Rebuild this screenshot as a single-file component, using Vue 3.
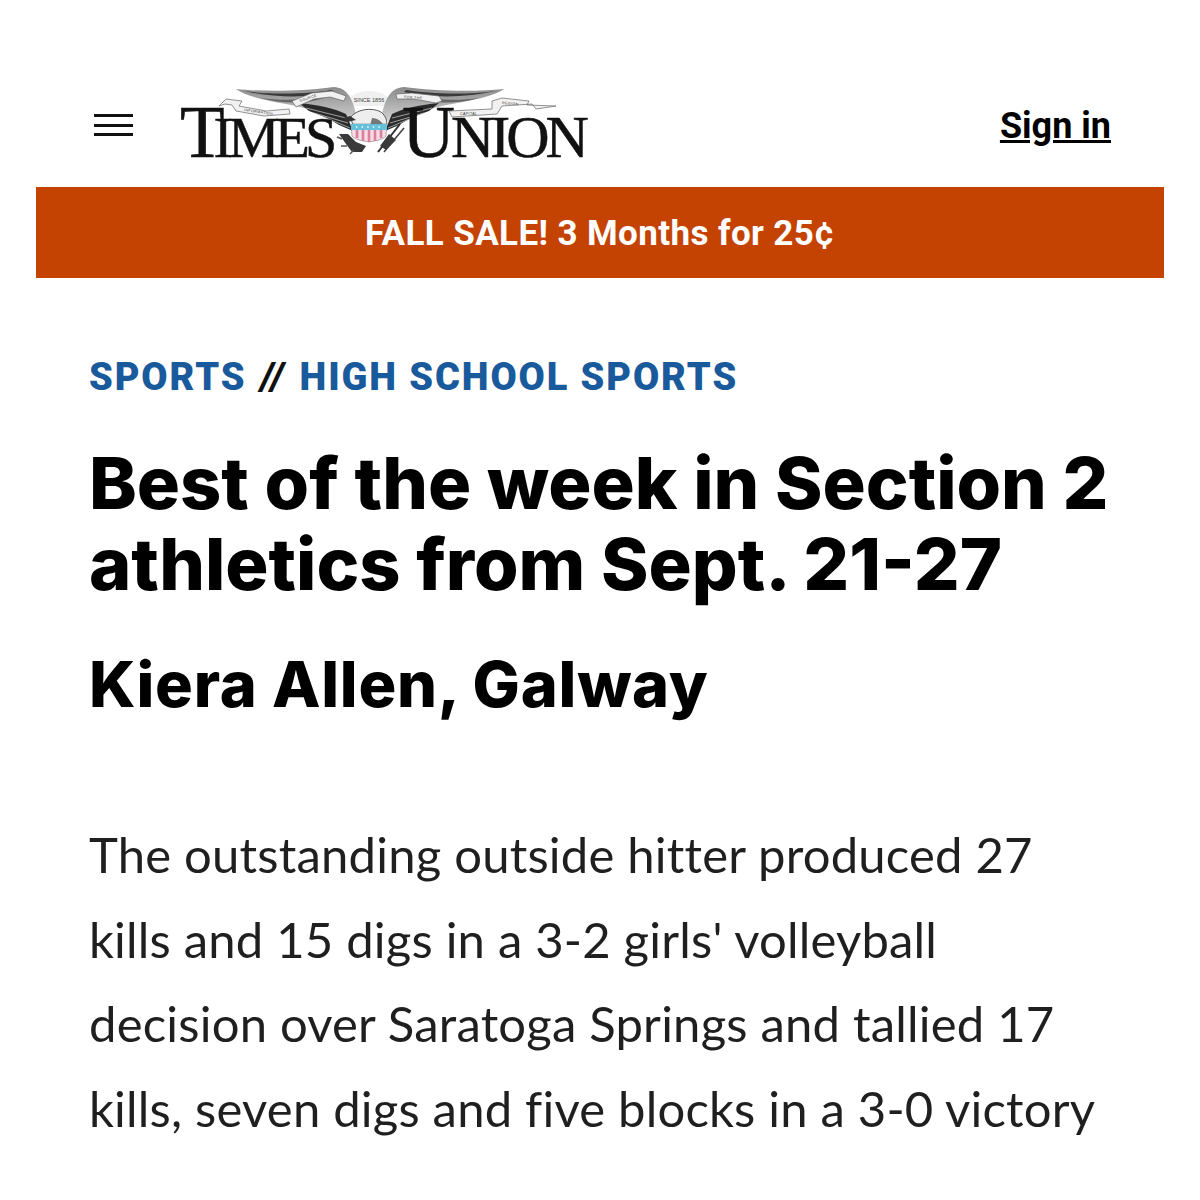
<template>
  <div class="page">
    <header class="topbar">
      <button class="menu-btn" type="button" aria-label="Menu">
        <span></span><span></span><span></span>
      </button>
      <a class="logo">
        <svg class="eagle" viewBox="0 0 360 72" width="360" height="72">
          <defs>
            <linearGradient id="wingfade" x1="0" y1="0" x2="0" y2="1">
              <stop offset="0" stop-color="#8a8a8a"/>
              <stop offset="1" stop-color="#dcdcdc"/>
            </linearGradient>
          </defs>

          <!-- halo above the head -->
          <path d="M133 22 C133 2 177 2 177 22 Z" fill="#f0f0f0"/>
          <text x="155" y="17.5" class="since">SINCE 1856</text>

          <!-- left wing -->
          <path d="M22 5 C50 8 95 7 120 3 C132 4 138 12 142 30 L132 42 C118 30 92 24 72 20 C50 16 32 12 22 5 Z" fill="url(#wingfade)"/>
          <path d="M30 7 C60 11 96 10 118 6 L120 8 C96 14 60 14 30 7 Z" fill="#3a3a3a"/>
          <path d="M46 14 C70 17 90 16 108 12 L110 14 C92 20 70 20 46 14 Z" fill="#666"/>
          <path d="M85 19 C104 21 120 24 132 30 L139 47 L125 41 C114 34 104 30 95 27 Z" fill="#2a2a2a"/>
          <path d="M92 24 L132 34 M100 29 L134 39 M110 33 L136 44" stroke="#bdbdbd" stroke-width=".8"/>

          <!-- right wing -->
          <path d="M290 5 C262 8 217 7 190 3 C178 4 172 12 168 30 L178 42 C192 30 218 24 238 20 C260 16 280 12 290 5 Z" fill="url(#wingfade)"/>
          <path d="M282 7 C252 11 216 10 192 6 L190 8 C216 14 252 14 282 7 Z" fill="#3a3a3a"/>
          <path d="M266 14 C242 17 222 16 204 12 L202 14 C220 20 242 20 266 14 Z" fill="#666"/>
          <path d="M225 19 C206 21 190 24 178 30 L171 47 L185 41 C196 34 206 30 215 27 Z" fill="#2a2a2a"/>
          <path d="M218 24 L178 34 M210 29 L176 39 M200 33 L174 44" stroke="#bdbdbd" stroke-width=".8"/>

          <!-- ribbons -->
          <path d="M5 22 L12 15 L28 17 L25 22 L52 27 L75 25 L76 30 L50 32 L22 27 L18 21 L11 20 Z" class="ribbon"/>
          <path d="M78 17 L98 9 L118 7 L132 12 L130 17 L116 13 L100 15 L82 23 Z" class="ribbon"/>
          <path d="M182 10 L198 9 L225 12 L228 17 L222 19 L200 15 L183 15 Z" class="ribbon"/>
          <path d="M235 27 L278 25 L278 17 L288 14 L315 17 L313 21 L342 22 L322 25 L318 20 L288 22 L283 30 L238 33 Z" class="ribbon"/>
          <text x="30" y="27" class="band" transform="rotate(8 30 27)">INFORMATION</text>
          <text x="86" y="18" class="band" transform="rotate(-18 86 18)">SOURCE</text>
          <text x="190" y="14" class="band" transform="rotate(4 190 14)">FOR THE</text>
          <text x="246" y="31" class="band">CAPITAL</text>
          <text x="288" y="20" class="band" transform="rotate(5 288 20)">REGION</text>

          <!-- body and head -->
          <path d="M136 34 C142 25 158 23 167 28 C172 32 174 38 172 42 L140 42 C138 38 137 36 136 34 Z" fill="#eeeeee" stroke="#333" stroke-width=".8"/>
          <path d="M136 32 L129 34 L133 38 L142 36 Z" fill="#333"/>
          <path d="M158 34 C164 34 168 38 170 42 L156 42 Z" fill="#777"/>

          <!-- shield -->
          <path d="M137 40 L173 40 L172 52 C169 56 160 57 155 58 C150 57 141 56 138 52 Z" fill="#f7dbe2" stroke="#666" stroke-width=".5"/>
          <path d="M137 40 L173 40 L173 46 L137 46 Z" fill="#63c1dc"/>
          <path d="M142 43 H170" stroke="#ffffff" stroke-width="1.4" stroke-dasharray="1.4 4.2"/>
          <path d="M143 46 V54 M149 46 V57 M155 46 V58 M161 46 V57 M167 46 V54" stroke="#d9809c" stroke-width="2.6"/>

          <!-- olive branch and arrows -->
          <path d="M125 50 L134 50 L142 58 L152 62 L148 68 L138 68 L132 60 Z" fill="#3a3a3a"/>
          <path d="M128 55 L123 53 M133 62 L127 62 M140 66 L136 70" stroke="#555" stroke-width="1.4"/>
          <path d="M186 40 L164 68" stroke="#2e2e2e" stroke-width="2"/>
          <path d="M190 44 L170 68" stroke="#444" stroke-width="1.6"/>
          <path d="M175 50 L182 56 L172 66 L166 62 Z" fill="#3a3a3a"/>
        </svg>
        <span class="word times"><b>T</b>IMES</span>
        <span class="word union"><b>U</b>NION</span>
      </a>
      <a class="sign-in">Sign in</a>
    </header>

    <div class="promo">FALL SALE! 3 Months for 25¢</div>

    <main class="article">
      <div class="crumbs">
        <a>SPORTS</a>
        <span class="sep">//</span>
        <a>HIGH SCHOOL SPORTS</a>
      </div>
      <h1>Best of the week in Section 2 athletics from Sept. 21-27</h1>
      <h2>Kiera Allen, Galway</h2>
      <p>The outstanding outside hitter produced 27 kills and 15 digs in a 3-2 girls' volleyball decision over Saratoga Springs and tallied 17 kills, seven digs and five blocks in a 3-0 victory</p>
    </main>
  </div>
</template>

<script setup>
</script>

<style>
html, body {
  margin: 0;
  background: #ffffff;
  overflow: hidden;
}
</style>

<style scoped>
.page {
  width: 1200px;
  height: 1200px;
  overflow: hidden;
  color: #000000;
  font-family: Inter, sans-serif;
}

.topbar {
  display: flex;
  align-items: center;
  height: 187px;
  padding: 63px 89px 0 94px;
  box-sizing: border-box;
}

.menu-btn {
  display: flex;
  flex-direction: column;
  gap: 6.5px;
  width: 39px;
  margin: 0 47px 0 0;
  padding: 0;
  border: none;
  background: none;
}

.menu-btn span {
  height: 3px;
  background: #111111;
}

.logo {
  position: relative;
  display: flex;
  align-items: baseline;
  width: 404px;
  padding-top: 14px;
  font-family: "Liberation Serif", "Times New Roman", serif;
  color: #111111;
  line-height: 1;
}

.eagle {
  position: absolute;
  left: 34px;
  top: 2px;
  overflow: visible;
}

.since {
  font-family: "Liberation Sans", Arial, sans-serif;
  font-size: 5.5px;
  text-anchor: middle;
  fill: #444444;
}

.band {
  font-family: "Liberation Sans", Arial, sans-serif;
  font-size: 3.6px;
  letter-spacing: .4px;
  fill: #333333;
}

.ribbon {
  fill: #f1f1f1;
  stroke: #666666;
  stroke-width: .7;
}

.word {
  position: relative;
  font-size: 60px;
  letter-spacing: -4px;
  -webkit-text-stroke: .5px #111111;
}

.word b {
  font-size: 73px;
  font-weight: 400;
}

.times {
  font-size: 58px;
  letter-spacing: -5px;
}

.times b {
  margin-right: -6px;
}

.union {
  margin-left: 70px;
}

.sign-in {
  margin-left: auto;
  padding-top: 2px;
  font-family: Roboto, sans-serif;
  font-size: 36px;
  font-weight: 700;
  text-decoration: underline;
}

.promo {
  margin: 0 36px;
  height: 91px;
  padding-top: 2px;
  box-sizing: border-box;
  display: flex;
  align-items: center;
  justify-content: center;
  background: #c44303;
  color: #ffffff;
  font-family: Roboto, sans-serif;
  font-size: 35px;
  font-weight: 700;
  letter-spacing: .4px;
}

.article {
  padding: 77px 88px 0 89px;
}

.crumbs {
  display: flex;
  gap: 14px;
  font-family: Roboto, sans-serif;
  font-size: 38px;
  font-weight: 900;
  letter-spacing: 1.9px;
  line-height: 44px;
  color: #195a9c;
}

.sep {
  color: #111111;
  font-style: italic;
}

h1 {
  margin: 43px 0 0;
  font-size: 72px;
  font-weight: 800;
  line-height: 81px;
}

h2 {
  margin: 44px 0 0;
  font-size: 63px;
  font-weight: 800;
  line-height: 72px;
  letter-spacing: .75px;
}

p {
  margin: 92px 0 0;
  font-family: Lato, sans-serif;
  font-size: 49px;
  line-height: 84.5px;
  letter-spacing: .2px;
  color: #1f1f1f;
}
</style>
